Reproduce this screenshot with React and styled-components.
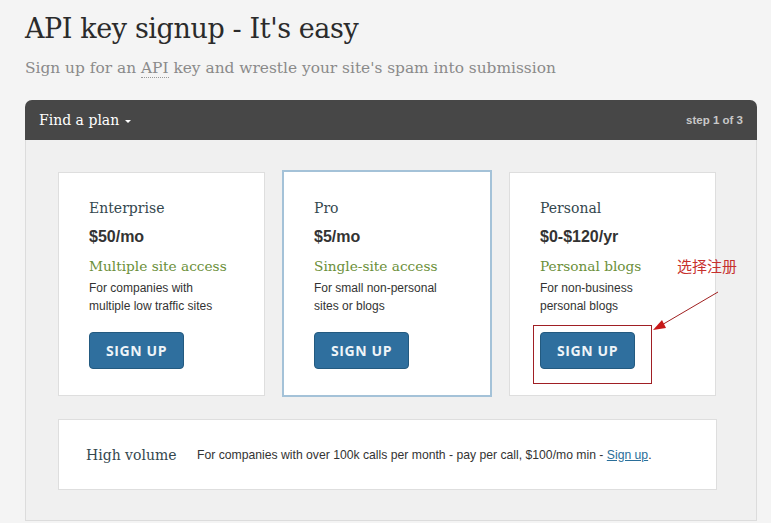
import React from "react";
import styled, { createGlobalStyle } from "styled-components";

const GlobalStyle = createGlobalStyle`
  html, body {
    margin: 0;
    padding: 0;
    background: #f4f4f4;
  }
  body {
    font-family: "Liberation Sans", Arial, sans-serif;
    color: #333;
  }
`;

const Page = styled.div`
  position: relative;
  width: 771px;
  height: 523px;
  overflow: hidden;
  padding: 11px 0 0 25px;
  box-sizing: border-box;
`;

const Title = styled.h1`
  margin: 0;
  font-family: "DejaVu Serif", serif;
  font-weight: normal;
  font-size: 27px;
  line-height: 36px;
  letter-spacing: -0.4px;
  color: #2b2b2b;
`;

const Subtitle = styled.p`
  margin: 11px 0 0;
  font-family: "DejaVu Serif", serif;
  font-size: 15.4px;
  line-height: 20px;
  color: #8a8a8a;
  abbr {
    text-decoration: none;
    border-bottom: 1px dotted #999;
  }
`;

const Panel = styled.div`
  margin-top: 22px;
  width: 730px;
  border: 1px solid #dcdcdc;
  border-top: none;
  border-radius: 7px 7px 0 0;
  background: #f0f0f0;
`;

const PanelHeader = styled.div`
  height: 40px;
  display: flex;
  align-items: center;
  justify-content: space-between;
  padding: 0 14px 0 14px;
  background: #474747;
  border-radius: 7px 7px 0 0;
  margin: 0 -1px;
`;

const PlanMenu = styled.span`
  font-family: "DejaVu Serif", serif;
  font-size: 14px;
  color: #fff;
  display: flex;
  align-items: center;
  gap: 6px;
  &::after {
    content: "";
    border-left: 3px solid transparent;
    border-right: 3px solid transparent;
    border-top: 3px solid #fff;
    margin-top: 2px;
  }
`;

const Step = styled.span`
  font-size: 11.5px;
  font-weight: bold;
  color: #c8c8c8;
`;

const PanelBody = styled.div`
  padding: 32px 37px 30px 32px;
`;

const Cards = styled.div`
  display: flex;
  gap: 17px;
  align-items: center;
`;

const Card = styled.div`
  width: ${p => (p.$active ? 210 : 207)}px;
  height: ${p => (p.$active ? 227 : 224)}px;
  box-sizing: border-box;
  background: #fff;
  border: ${p => (p.$active ? "2px solid #a4c2d8" : "1px solid #dedede")};
  padding: ${p => (p.$active ? "26px 0 0 30px" : "25px 0 0 30px")};
  margin: ${p => (p.$active ? "-2px 0 -1px" : "0")};
`;

const PlanName = styled.div`
  font-family: "DejaVu Serif", serif;
  font-size: 14px;
  line-height: 20px;
  color: #34474e;
`;

const Price = styled.div`
  margin-top: 9px;
  font-size: 16px;
  font-weight: bold;
  line-height: 20px;
  color: #333;
`;

const Tagline = styled.div`
  margin-top: 9px;
  font-family: "DejaVu Serif", serif;
  font-size: 13.7px;
  line-height: 20px;
  color: #6b8f3a;
`;

const Desc = styled.p`
  margin: 3px 0 0;
  font-size: 12px;
  line-height: 18px;
  color: #333;
`;

const SignUp = styled.button`
  margin-top: 17px;
  width: 95px;
  height: 37px;
  background: #2f6f9e;
  border: 1px solid #235a80;
  border-radius: 4px;
  color: #eef4f8;
  font-family: "Open Sans", sans-serif;
  font-weight: 700;
  font-size: 14px;
  letter-spacing: 0.6px;
  cursor: pointer;
`;

const Volume = styled.div`
  margin-top: 23px;
  height: 71px;
  box-sizing: border-box;
  background: #fff;
  border: 1px solid #dedede;
  width: 659px;
  display: flex;
  align-items: center;
  padding-left: 27px;
`;

const VolumeName = styled.span`
  font-family: "DejaVu Serif", serif;
  font-size: 14px;
  color: #34474e;
  width: 111px;
`;

const VolumeText = styled.span`
  font-size: 12.2px;
  color: #333;
  a {
    color: #2a6e99;
  }
`;

const Note = styled.div`
  position: absolute;
  left: 0;
  top: 0;
  pointer-events: none;
`;

const NoteBox = styled.div`
  position: absolute;
  left: 533px;
  top: 325px;
  width: 119px;
  height: 59px;
  box-sizing: border-box;
  border: 1px solid #a01f24;
`;

const NoteText = styled.div`
  position: absolute;
  left: 677px;
  top: 255px;
  font-family: "Noto Sans CJK SC", sans-serif;
  font-size: 15px;
  line-height: 22px;
  color: #c7302d;
  white-space: nowrap;
`;

const plans = [
  {
    name: "Enterprise",
    price: "$50/mo",
    tag: "Multiple site access",
    desc: ["For companies with", "multiple low traffic sites"],
  },
  {
    name: "Pro",
    price: "$5/mo",
    tag: "Single-site access",
    desc: ["For small non-personal", "sites or blogs"],
    active: true,
  },
  {
    name: "Personal",
    price: "$0-$120/yr",
    tag: "Personal blogs",
    desc: ["For non-business", "personal blogs"],
  },
];

export default function App() {
  return (
    <Page>
      <GlobalStyle />
      <Title>API key signup - It's easy</Title>
      <Subtitle>
        Sign up for an <abbr>API</abbr> key and wrestle your site's spam into submission
      </Subtitle>
      <Panel>
        <PanelHeader>
          <PlanMenu>Find a plan</PlanMenu>
          <Step>step 1 of 3</Step>
        </PanelHeader>
        <PanelBody>
          <Cards>
            {plans.map(p => (
              <Card key={p.name} $active={p.active}>
                <PlanName>{p.name}</PlanName>
                <Price>{p.price}</Price>
                <Tagline>{p.tag}</Tagline>
                <Desc>
                  {p.desc[0]}
                  <br />
                  {p.desc[1]}
                </Desc>
                <SignUp>SIGN UP</SignUp>
              </Card>
            ))}
          </Cards>
          <Volume>
            <VolumeName>High volume</VolumeName>
            <VolumeText>
              For companies with over 100k calls per month - pay per call, $100/mo min - <a href="#">Sign up</a>.
            </VolumeText>
          </Volume>
        </PanelBody>
      </Panel>
      <Note>
        <NoteBox />
        <NoteText>选择注册</NoteText>
        <svg width="771" height="523" style={{ position: "absolute", left: 0, top: 0 }}>
          <line x1="718" y1="292" x2="660" y2="326" stroke="#a02020" strokeWidth="1" />
          <polygon points="653,330 662,320 666,328" fill="#c81818" />
        </svg>
      </Note>
    </Page>
  );
}
